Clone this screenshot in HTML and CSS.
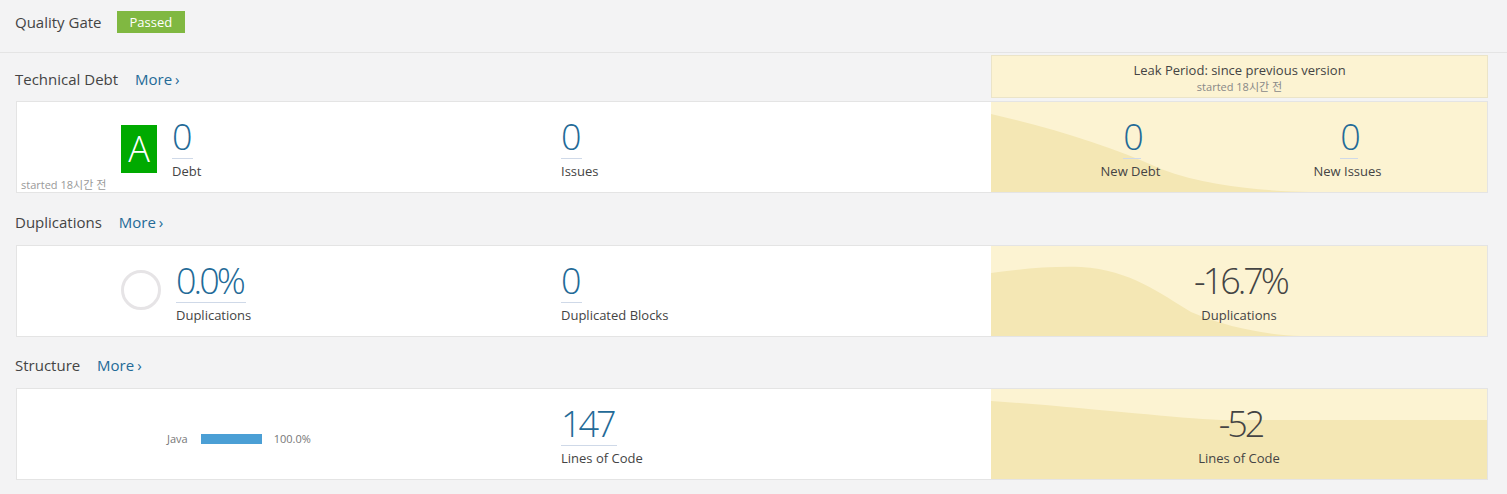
FILE: index.html
```html
<!DOCTYPE html>
<html lang="en">
<head>
<meta charset="utf-8">
<title>Overview</title>
<link rel="stylesheet" href="styles.css">
</head>
<body>
<div class="gate">
  <h2 class="gate-title">Quality Gate</h2>
  <span class="badge">Passed</span>
</div>

<div class="content">
  <section class="domain">
    <div class="domain-head domain-head-first">
      <h3 class="domain-title">Technical Debt <a class="more" href="#">More<span class="chev">›</span></a></h3>
      <div class="leak-head">
        <div class="leak-head-title">Leak Period: since previous version</div>
        <div class="leak-head-date">started 18시간 전</div>
      </div>
    </div>
    <div class="card">
      <div class="card-main">
        <div class="col col-first">
          <div class="rating">A</div>
          <div class="metric">
            <a class="metric-value" href="#">0</a>
            <span class="metric-label">Debt</span>
          </div>
        </div>
        <div class="col">
          <div class="metric">
            <a class="metric-value" href="#">0</a>
            <span class="metric-label">Issues</span>
          </div>
        </div>
        <span class="card-note">started 18시간 전</span>
      </div>
      <div class="card-leak">
        <svg class="chart" viewBox="0 0 496 90" preserveAspectRatio="none">
          <path d="M0,12 C60,26 120,44 170,67 C220,86 280,89 320,90 L0,90 Z"/>
        </svg>
        <div class="leak-cols leak-cols-two">
          <div class="metric metric-center">
            <a class="metric-value" href="#">0</a>
            <span class="metric-label">New Debt</span>
          </div>
          <div class="metric metric-center">
            <a class="metric-value" href="#">0</a>
            <span class="metric-label">New Issues</span>
          </div>
        </div>
      </div>
    </div>
  </section>

  <section class="domain">
    <div class="domain-head">
      <h3 class="domain-title">Duplications <a class="more" href="#">More<span class="chev">›</span></a></h3>
    </div>
    <div class="card">
      <div class="card-main">
        <div class="col col-first">
          <svg class="donut" viewBox="0 0 40 40"><circle cx="20" cy="20" r="18.5"/></svg>
          <div class="metric">
            <a class="metric-value" href="#">0.0%</a>
            <span class="metric-label">Duplications</span>
          </div>
        </div>
        <div class="col">
          <div class="metric">
            <a class="metric-value" href="#">0</a>
            <span class="metric-label">Duplicated Blocks</span>
          </div>
        </div>
      </div>
      <div class="card-leak">
        <svg class="chart" viewBox="0 0 496 90" preserveAspectRatio="none">
          <path d="M0,27 C30,23 60,20 90,21 C140,24 170,48 200,66 C240,83 280,89 310,90 L0,90 Z"/>
        </svg>
        <div class="leak-cols">
          <div class="metric metric-center">
            <span class="metric-value metric-plain">-16.7%</span>
            <span class="metric-label">Duplications</span>
          </div>
        </div>
      </div>
    </div>
  </section>

  <section class="domain">
    <div class="domain-head">
      <h3 class="domain-title">Structure <a class="more" href="#">More<span class="chev">›</span></a></h3>
    </div>
    <div class="card">
      <div class="card-main">
        <div class="col col-lang">
          <div class="lang-row">
            <span class="lang-name">Java</span>
            <span class="lang-bar" style="width:61px"></span>
            <span class="lang-pct">100.0%</span>
          </div>
        </div>
        <div class="col">
          <div class="metric">
            <a class="metric-value" href="#">147</a>
            <span class="metric-label">Lines of Code</span>
          </div>
        </div>
      </div>
      <div class="card-leak">
        <svg class="chart" viewBox="0 0 496 90" preserveAspectRatio="none">
          <path d="M0,12 C100,19 180,29 230,31 L496,31 L496,90 L0,90 Z"/>
        </svg>
        <div class="leak-cols">
          <div class="metric metric-center">
            <span class="metric-value metric-plain">-52</span>
            <span class="metric-label">Lines of Code</span>
          </div>
        </div>
      </div>
    </div>
  </section>
</div>
</body>
</html>
```

FILE: styles.css
```css
* { box-sizing: border-box; }

body {
  margin: 0;
  background: #f3f3f4;
  color: #444;
  font-family: "Open Sans", "Noto Sans CJK KR", sans-serif;
  font-size: 13px;
}

a { text-decoration: none; color: #236a97; }

.gate {
  display: flex;
  align-items: flex-start;
  height: 53px;
  padding: 11px 0 0 15px;
  border-bottom: 1px solid #e4e4e4;
}

.gate-title {
  margin: 0;
  font-size: 15px;
  font-weight: 400;
  line-height: 22px;
  color: #444;
}

.badge {
  margin-left: 15px;
  height: 22px;
  line-height: 22px;
  padding: 0 13px;
  background: #80b841;
  color: #fff;
  font-size: 13px;
}

.content {
  padding: 0 19px 0 16px;
}

.domain-head {
  display: flex;
  align-items: flex-start;
  padding: 18.5px 0 13px;
}

.domain-head-first {
  padding: 2px 0 3px;
}

.domain-title {
  margin: 0 0 0 -1px;
  font-size: 15px;
  font-weight: 400;
  line-height: 20px;
  color: #444;
}

.domain-head-first .domain-title {
  margin-top: 14px;
}

.more {
  margin-left: 13px;
}

.chev {
  margin-left: 3px;
}

.leak-head {
  margin-left: auto;
  width: 497px;
  height: 43px;
  padding-top: 5px;
  background: #fcf3d2;
  border: 1px solid #ebe4c8;
  text-align: center;
}

.leak-head-title {
  font-size: 13px;
  line-height: 18px;
  color: #444;
}

.leak-head-date {
  margin-top: 1px;
  font-size: 11px;
  line-height: 14px;
  color: #888;
}

.card {
  display: flex;
  height: 92px;
  background: #fff;
  border: 1px solid #e4e4e4;
}

.card-main {
  position: relative;
  flex: 1;
  display: grid;
  grid-template-columns: 544px 1fr;
}

.col {
  display: flex;
  align-items: flex-start;
  padding-top: 17px;
}

.col-first {
  padding-left: 104px;
}

.col-lang {
  padding-left: 150px;
}

.card-note {
  position: absolute;
  left: 4px;
  bottom: 0;
  font-size: 11px;
  line-height: 14px;
  color: #999;
}

.rating {
  width: 36px;
  height: 48px;
  margin: 6px 15px 0 0;
  background: #00aa00;
  color: #fff;
  font-size: 36px;
  font-weight: 300;
  line-height: 48px;
  text-align: center;
}

.donut {
  width: 40px;
  height: 40px;
  margin: 7px 15px 0 0;
}

.donut circle {
  fill: none;
  stroke: #e6e4e6;
  stroke-width: 3;
}

.metric {
  display: flex;
  flex-direction: column;
  align-items: flex-start;
}

.metric-center {
  align-items: center;
}

.metric-value {
  font-size: 36px;
  font-weight: 300;
  line-height: 36px;
  letter-spacing: -3px;
  padding: 0 3px 3px 0;
  border-bottom: 1px solid #cfd9e8;
  color: #236a97;
}

.metric-center .metric-value {
  padding: 0 0 3px 0;
  margin-right: -3px;
}

.metric-plain {
  color: #444;
  border-bottom-color: transparent;
}

.metric-label {
  margin-top: 3px;
  font-size: 13px;
  line-height: 18px;
  color: #444;
}

.card-leak {
  position: relative;
  flex: 0 0 496px;
  background: #fcf3d2;
}

.chart {
  position: absolute;
  left: 0;
  top: 0;
  width: 100%;
  height: 100%;
}

.chart path {
  fill: #f4e7b4;
}

.leak-cols {
  position: relative;
  display: grid;
  grid-template-columns: 1fr;
  padding: 17px 31px 0;
}

.leak-cols-two {
  grid-template-columns: 1fr 1fr;
}

.lang-row {
  display: flex;
  align-items: center;
  margin-top: 25px;
  font-size: 11px;
  line-height: 16px;
  color: #777;
}

.lang-bar {
  height: 10px;
  margin: 0 12px 0 13px;
  background: #4b9fd5;
}
```
